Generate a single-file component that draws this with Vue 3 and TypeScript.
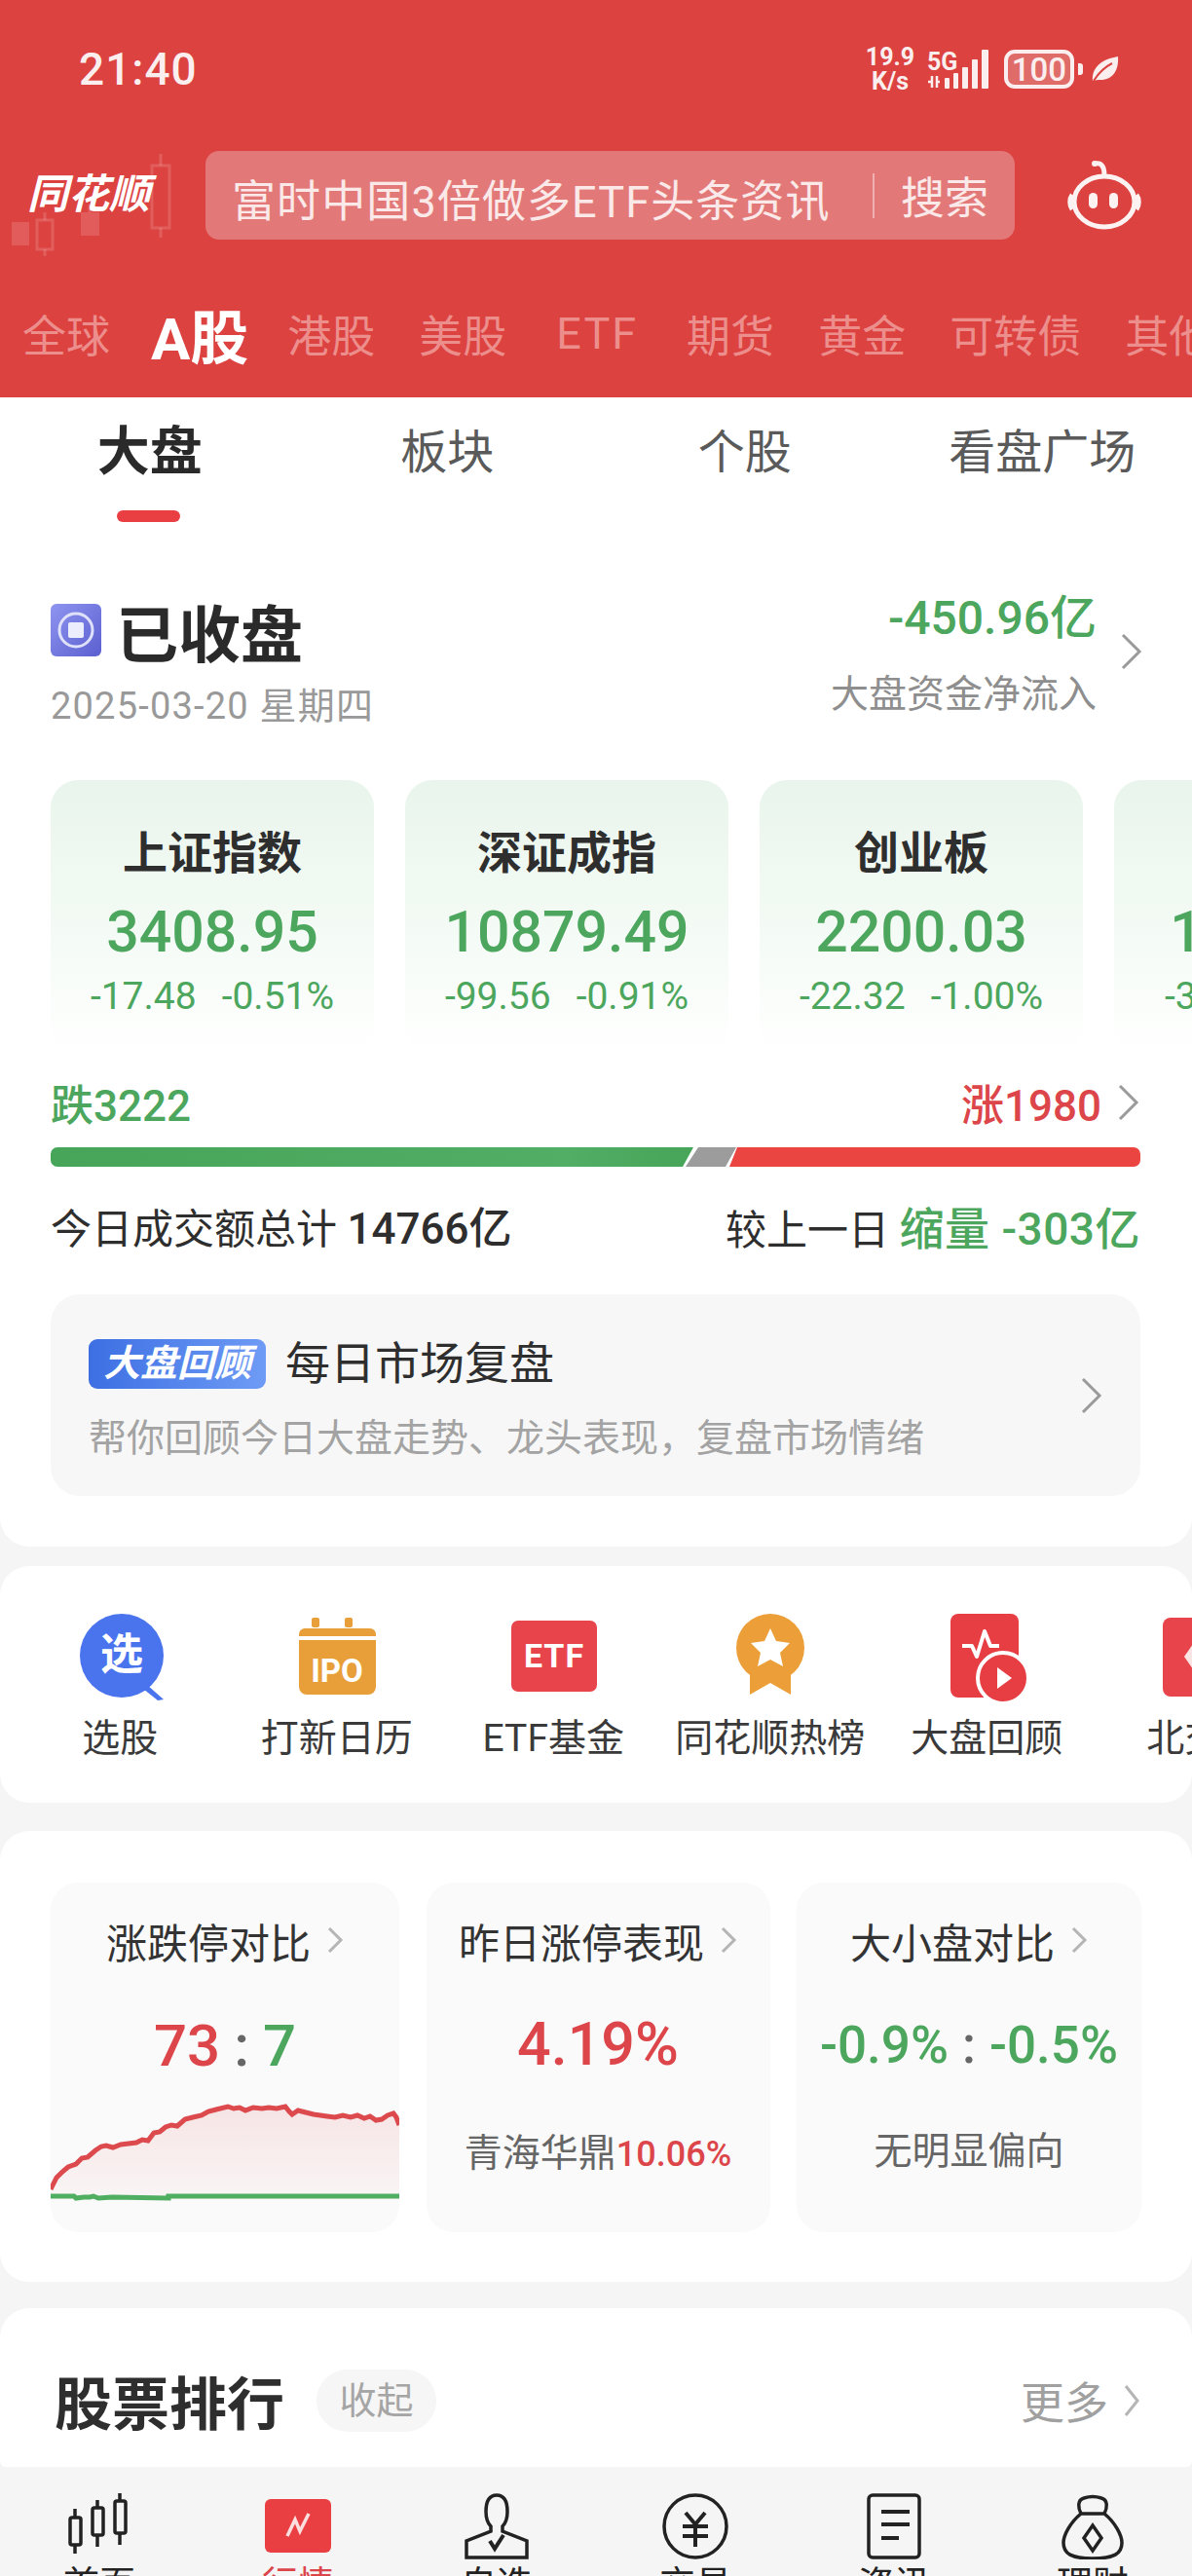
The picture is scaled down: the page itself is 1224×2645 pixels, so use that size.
<script setup lang="ts">
interface Index { name: string; value: string; change: string; pct: string }
const topTabs: string[] = ['全球', 'A股', '港股', '美股', 'ETF', '期货', '黄金', '可转债', '其他']
const subTabs: string[] = ['大盘', '板块', '个股', '看盘广场']
const indexes: Index[] = [
  { name: '上证指数', value: '3408.95', change: '-17.48', pct: '-0.51%' },
  { name: '深证成指', value: '10879.49', change: '-99.56', pct: '-0.91%' },
  { name: '创业板', value: '2200.03', change: '-22.32', pct: '-1.00%' },
  { name: '科创50', value: '1039.72', change: '-3.87', pct: '-0.37%' }
]
const navLabels: string[] = ['首页', '行情', '自选', '交易', '资讯', '理财']
const reviewSub = '帮你回顾今日大盘走势、龙头表现\uFF0C复盘市场情绪'
const redLine = '52,2248 58,2236 64,2230 70,2225 78,2222 84,2216 90,2215 98,2208 104,2204 109,2203 116,2205 124,2202 132,2201 140,2200 146,2197 152,2198 158,2190 164,2189 170,2184 176,2182 182,2183 190,2176 198,2174 207,2172 214,2168 222,2166 234,2163 240,2165 246,2164 252,2167 260,2164 269,2165 276,2164 284,2165 293,2163 297,2168 300,2171 306,2167 314,2169 322,2171 336,2173 344,2174 352,2172 360,2174 367,2172 374,2175 380,2173 386,2177 392,2176 398,2172 404,2170 407,2174 410,2182'
const areaPoints = `${redLine} 410,2256 52,2256`
</script>

<template>
  <div class="page">
    <header class="header">
      <div class="status">
        <span class="time">21:40</span>
        <div class="status-right">
          <div class="speed"><span>19.9</span><span>K/s</span></div>
          <svg class="signal" width="72" height="46" viewBox="0 0 72 46">
            <text x="2" y="24" class="five">5G</text>
            <path d="M7 30v12M3 36h3M12 30v12M12 36h3" stroke="#fbeeee" stroke-width="2.5" fill="none" />
            <g fill="#fbeeee">
              <rect x="20" y="32" width="5" height="11" rx="1" />
              <rect x="29" y="27" width="5" height="16" rx="1" />
              <rect x="38" y="21" width="6" height="22" rx="1" />
              <rect x="48" y="13" width="6" height="30" rx="1" />
              <rect x="58" y="3" width="7" height="40" rx="1" />
            </g>
          </svg>
          <div class="battery"><span>100</span><i class="nub"></i></div>
          <svg width="30" height="30" viewBox="0 0 30 30">
            <path d="M2 27C1 14 10 5 28 2c1 14-5 24-18 24-3 0-5 0-8 1z" fill="#fbeeee" />
            <path d="M3 27C8 19 14 13 22 9" stroke="#dc4240" stroke-width="2" fill="none" />
          </svg>
        </div>
      </div>
      <div class="search-row">
        <div class="logo">
          <svg class="candles" width="190" height="105" viewBox="0 0 190 105">
            <g fill="#fff" fill-opacity=".14" stroke="none">
              <rect x="12" y="70" width="18" height="24" />
              <rect x="83" y="60" width="19" height="24" />
            </g>
            <g fill="none" stroke="#fff" stroke-opacity=".15" stroke-width="3">
              <rect x="38" y="68" width="16" height="30" />
              <path d="M46 60v8M46 98v12M92 52v8M165 0v12M165 76v10" />
              <rect x="156" y="12" width="18" height="64" />
            </g>
          </svg>
          <span class="logo-text">同花顺</span>
        </div>
        <div class="search">
          <span class="placeholder">富时中国3倍做多ETF头条资讯</span>
          <i class="search-div"></i>
          <span class="search-btn">搜索</span>
        </div>
        <svg class="robot" width="80" height="72" viewBox="0 0 80 72">
          <g fill="none" stroke="#fdf2f2" stroke-width="5" stroke-linecap="round">
            <path d="M31 4c6-1 9 3 9 12" />
            <ellipse cx="40" cy="43" rx="31" ry="26" />
          </g>
          <circle cx="30" cy="4" r="3" fill="#fdf2f2" />
          <path d="M7 36c-3 4-3 11 0 15M73 36c3 4 3 11 0 15" stroke="#fdf2f2" stroke-width="5" fill="none" />
          <rect x="24" y="34" width="9" height="16" rx="4.5" fill="#fdf2f2" />
          <rect x="45" y="34" width="9" height="16" rx="4.5" fill="#fdf2f2" />
        </svg>
      </div>
      <nav class="top-tabs">
        <span v-for="t in topTabs" :key="t" :class="['top-tab', { active: t === 'A股', latin: t === 'ETF' }]">{{ t }}</span>
      </nav>
    </header>

    <section class="card card-main">
      <div class="sub-tabs">
        <div v-for="t in subTabs" :key="t" :class="['sub-tab', { active: t === '大盘' }]">{{ t }}</div>
      </div>

      <div class="head">
        <div class="head-left">
          <div class="closed">
            <svg width="52" height="54" viewBox="0 0 52 54">
              <defs>
                <linearGradient id="closedBg" x1="0" y1="0" x2="1" y2="1">
                  <stop offset="0" stop-color="#8f95f0" />
                  <stop offset="1" stop-color="#5b5fd0" />
                </linearGradient>
              </defs>
              <rect width="52" height="54" rx="6" fill="url(#closedBg)" />
              <circle cx="26" cy="27" r="17" fill="none" stroke="#dfe1fb" stroke-width="3" />
              <rect x="18" y="19" width="16" height="16" rx="2" fill="#eceefd" />
            </svg>
            <span>已收盘</span>
          </div>
          <div class="date">2025-03-20 星期四</div>
        </div>
        <div class="head-right">
          <div class="flow-box">
            <div class="flow">-450.96亿</div>
            <div class="flow-label">大盘资金净流入</div>
          </div>
          <svg class="chev-lg head-chev" width="24" height="38" viewBox="0 0 24 38"><path d="M3 2l17 17L3 36" /></svg>
        </div>
      </div>

      <div class="index-row">
        <div v-for="i in indexes" :key="i.name" class="index-card">
          <div class="index-name">{{ i.name }}</div>
          <div class="index-value">{{ i.value }}</div>
          <div class="index-change"><span>{{ i.change }}</span><span>{{ i.pct }}</span></div>
        </div>
      </div>

      <div class="count-row">
        <span class="green">跌3222</span>
        <span class="count-up"><span class="red">涨1980</span>
          <svg class="chev-lg" width="24" height="38" viewBox="0 0 24 38"><path d="M3 2l17 17L3 36" /></svg>
        </span>
      </div>

      <div class="bar">
        <svg width="1119" height="20" viewBox="0 0 1119 20" preserveAspectRatio="none">
          <defs>
            <linearGradient id="greenBar" x1="0" y1="0" x2="1" y2="0">
              <stop offset="0" stop-color="#46a558" />
              <stop offset=".8" stop-color="#52ad65" />
              <stop offset="1" stop-color="#46a558" />
            </linearGradient>
          </defs>
          <polygon points="0,0 660,0 649,20 0,20" fill="url(#greenBar)" />
          <polygon points="665,0 704,0 693,20 652,20" fill="#9c9c9c" />
          <polygon points="705,0 1119,0 1119,20 697,20" fill="#ea4540" />
        </svg>
      </div>

      <div class="turnover">
        <span>今日成交额总计 <b>14766亿</b></span>
        <span>较上一日 <em>缩量 -303亿</em></span>
      </div>

      <div class="review">
        <div class="review-body">
          <div class="review-title">
            <span class="review-badge">大盘回顾</span>
            <span>每日市场复盘</span>
          </div>
          <div class="review-sub">{{ reviewSub }}</div>
        </div>
        <svg class="chev-lg" width="24" height="38" viewBox="0 0 24 38"><path d="M3 2l17 17L3 36" /></svg>
      </div>
    </section>

    <section class="card card-icons">
      <div class="shortcut">
        <svg width="100" height="100" viewBox="0 0 100 100">
          <path d="M78 78l17 15-6 1-15-12z" fill="#4a73ee" />
          <circle cx="52" cy="48" r="43" fill="#4a73ee" />
          <text x="52" y="62" text-anchor="middle" class="ic-xuan">选</text>
        </svg>
        <span>选股</span>
      </div>
      <div class="shortcut">
        <svg width="100" height="100" viewBox="0 0 100 100">
          <rect x="24" y="9" width="8" height="10" rx="2" fill="#e89f3a" />
          <rect x="58" y="9" width="8" height="10" rx="2" fill="#e89f3a" />
          <path d="M11 26a6 6 0 0 1 6-6h67a6 6 0 0 1 6 6v2H11z" fill="#e89f3a" />
          <path d="M11 32h79v48a8 8 0 0 1-8 8H19a8 8 0 0 1-8-8z" fill="#e89f3a" />
          <text x="50" y="75" text-anchor="middle" class="ic-ipo">IPO</text>
        </svg>
        <span>打新日历</span>
      </div>
      <div class="shortcut">
        <svg width="100" height="100" viewBox="0 0 100 100">
          <rect x="7" y="12" width="88" height="73" rx="7" fill="#e8444c" />
          <text x="51" y="60" text-anchor="middle" class="ic-etf">ETF</text>
        </svg>
        <span>ETF基金</span>
      </div>
      <div class="shortcut">
        <svg width="100" height="100" viewBox="0 0 100 100">
          <path d="M29 55h42v33L50 76 29 88z" fill="#ec9f38" />
          <ellipse cx="50" cy="40" rx="35" ry="35" fill="#ec9f38" />
          <path d="M50 20l6 13 14 2-10 10 3 14-13-7-13 7 3-14-10-10 14-2z" fill="#fff" />
        </svg>
        <span>同花顺热榜</span>
      </div>
      <div class="shortcut">
        <svg width="100" height="100" viewBox="0 0 100 100">
          <rect x="13" y="5" width="70" height="86" rx="8" fill="#e63e43" />
          <path d="M25 38h10l5 11 8-26 6 15h9" fill="none" stroke="#fff" stroke-width="4" stroke-linejoin="round" />
          <circle cx="67" cy="71" r="26" fill="#e63e43" stroke="#fff" stroke-width="4" />
          <path d="M61 60l15 11-15 11z" fill="#fff" />
        </svg>
        <span>大盘回顾</span>
      </div>
      <div class="shortcut">
        <svg width="100" height="100" viewBox="0 0 100 100">
          <rect x="8" y="9" width="82" height="81" rx="8" fill="#e8444c" />
          <path d="M38 9h44a8 8 0 0 1 8 8v65a8 8 0 0 1-8 8H38z" fill="#f0949a" />
          <path d="M30 49l14-20 14 20-14 20z" fill="#fbe4e4" />
        </svg>
        <span>北交所</span>
      </div>
    </section>

    <section class="card card-compare">
      <div class="cmp cmp-chart">
        <div class="cmp-title">涨跌停对比<svg class="chev-sm" width="18" height="28" viewBox="0 0 18 28"><path d="M3 2l12 12L3 26" /></svg></div>
        <div class="cmp-ratio"><span class="red">73</span><span class="colon">:</span><span class="green">7</span></div>
        <svg class="cmp-svg" width="358" height="122" viewBox="52 2150 358 122">
          <defs>
            <linearGradient id="areaFill" x1="0" y1="0" x2="0" y2="1">
              <stop offset="0" stop-color="#e0474c" stop-opacity=".12" />
              <stop offset="1" stop-color="#e0474c" stop-opacity=".03" />
            </linearGradient>
          </defs>
          <polygon :points="areaPoints" fill="url(#areaFill)" />
          <polyline :points="redLine" fill="none" stroke="#dc4a4e" stroke-width="5" />
          <path d="M52 2255h24l2 2 8-1h6l4-1 5 2 14-1 58 1v-2h240" fill="none" stroke="#4fae5f" stroke-width="5" />
        </svg>
      </div>
      <div class="cmp">
        <div class="cmp-title">昨日涨停表现<svg class="chev-sm" width="18" height="28" viewBox="0 0 18 28"><path d="M3 2l12 12L3 26" /></svg></div>
        <div class="cmp-value red">4.19%</div>
        <div class="cmp-foot">青海华鼎<span class="red">10.06%</span></div>
      </div>
      <div class="cmp">
        <div class="cmp-title">大小盘对比<svg class="chev-sm" width="18" height="28" viewBox="0 0 18 28"><path d="M3 2l12 12L3 26" /></svg></div>
        <div class="cmp-pair green">-0.9%<span class="colon">:</span>-0.5%</div>
        <div class="cmp-foot">无明显偏向</div>
      </div>
    </section>

    <section class="card card-rank">
      <span class="rank-title">股票排行</span>
      <span class="rank-pill">收起</span>
      <span class="rank-more">更多
        <svg class="chev-sm" width="18" height="34" viewBox="0 0 18 34"><path d="M3 2l12 15L3 32" /></svg>
      </span>
    </section>

    <nav class="bottom-nav">
      <div v-for="(label, n) in navLabels" :key="label" :class="['nav-item', { active: n === 1 }]">
        <svg width="80" height="68" viewBox="0 0 80 68">
          <g v-if="n === 0" fill="none" stroke="#222" stroke-width="3.5">
            <rect x="10" y="25" width="11" height="28" rx="2" />
            <rect x="33" y="15" width="11" height="28" rx="2" />
            <rect x="56" y="8" width="11" height="33" rx="2" />
            <path d="M15 16v9M15 53v9M38 7v8M38 43v12M61 0v8M61 41v12" />
          </g>
          <g v-else-if="n === 1">
            <rect x="6" y="6" width="68" height="55" rx="6" fill="#ea3f42" />
            <path d="M29 44l8-17 5 12 9-18" fill="none" stroke="#fbdede" stroke-width="3.5" />
          </g>
          <g v-else-if="n === 2" fill="none" stroke="#222" stroke-width="3.5">
            <path d="M40 2c-7 0-11 6-11 17 0 7 2 12 5 15v5L9 49v17h62V49L46 39v-5c3-3 5-8 5-15 0-11-4-17-11-17z" />
            <path d="M33 49l5 8 9-14" stroke-width="4" />
          </g>
          <g v-else-if="n === 3" fill="none" stroke="#222">
            <ellipse cx="40" cy="34" rx="32" ry="32" stroke-width="3.5" />
            <path d="M30 20l10 12 10-12M27 34h26M27 44h26M40 32v23" stroke-width="4" />
          </g>
          <g v-else-if="n === 4" fill="none" stroke="#222">
            <rect x="14" y="2" width="52" height="64" rx="4" stroke-width="3.5" />
            <path d="M27 19h29M27 32h29M27 46h18" stroke-width="4" />
          </g>
          <g v-else fill="none" stroke="#222" stroke-width="3.5">
            <path d="M28 21c-3-6-4-14 3-16 6-2 12-2 18 0 7 2 6 10 3 16" />
            <path d="M28 21h24c11 9 18 22 18 30 0 11-8 16-30 16S10 62 10 51c0-8 7-21 18-30z" />
            <path d="M40 33l9 13-9 13-9-13z" />
          </g>
        </svg>
        <span>{{ label }}</span>
      </div>
    </nav>
  </div>
</template>

<style>
html, body { margin: 0; background: #f5f5f5; }
</style>

<style scoped>
.page {
  width: 1224px;
  height: 2645px;
  overflow: hidden;
  display: flex;
  flex-direction: column;
  background: #f5f5f5;
  color: #2e2e2e;
  font-family: Roboto, "Noto Sans CJK SC", sans-serif;
}
.red { color: #dc4549; }
.green { color: #4ca65d; }

.header { background: #dc4240; height: 408px; flex-shrink: 0; color: #fff; }
.status {
  height: 155px;
  padding: 46px 74px 0 81px;
  box-sizing: border-box;
  display: flex;
  justify-content: space-between;
  align-items: flex-start;
}
.time { font-size: 46px; line-height: 50px; font-weight: 500; color: #fbeeee; letter-spacing: 1px; }
.status-right { display: flex; align-items: center; color: #fbeeee; }
.speed {
  width: 56px;
  display: flex;
  flex-direction: column;
  align-items: center;
  font-size: 25px;
  line-height: 25px;
  font-weight: 700;
  margin-right: 8px;
}
.signal { margin-right: 9px; }
.five { font-size: 25px; font-weight: 700; fill: #fbeeee; }
.battery {
  position: relative;
  width: 72px;
  height: 40px;
  box-sizing: border-box;
  border: 4px solid #fbeeee;
  border-radius: 11px;
  background: #e06c6a;
  display: flex;
  align-items: center;
  justify-content: center;
  font-size: 33px;
  font-weight: 500;
  margin-right: 17px;
}
.nub {
  position: absolute;
  right: -13px;
  top: 10px;
  width: 5px;
  height: 12px;
  border-radius: 0 3px 3px 0;
  background: #fbeeee;
}

.search-row { display: flex; align-items: flex-start; height: 91px; }
.logo { position: relative; width: 211px; height: 91px; flex-shrink: 0; }
.candles { position: absolute; left: 0; top: 3px; }
.logo-text {
  position: absolute;
  left: 28px;
  top: 20px;
  font-size: 42px;
  line-height: 50px;
  font-weight: 700;
  font-style: italic;
  color: #fff;
  white-space: nowrap;
}
.search {
  width: 831px;
  height: 91px;
  flex-shrink: 0;
  border-radius: 14px;
  background: #e27978;
  display: flex;
  align-items: center;
  padding: 5px 0 0 27px;
  box-sizing: border-box;
  color: #fbe9e9;
}
.placeholder { width: 658px; font-size: 45px; white-space: nowrap; letter-spacing: 1.1px; }
.search-div { width: 2px; height: 46px; background: #efb0af; margin: -5px 27px 0 0; }
.search-btn { font-size: 45px; white-space: nowrap; margin-top: -5px; }
.robot { margin: 9px 0 0 52px; flex-shrink: 0; }

.top-tabs {
  display: flex;
  align-items: center;
  gap: 45px;
  height: 72px;
  margin-top: 60px;
  padding-left: 23px;
  overflow: hidden;
  white-space: nowrap;
}
.top-tab { font-size: 45px; color: #ec8e8c; flex-shrink: 0; }
.top-tab.active { font-size: 60px; font-weight: 700; color: #fff; margin: 0 -5px 0 -3px; }
.top-tab.latin { letter-spacing: 2px; margin: 0 5px 0 6px; }

.card { background: #fff; border-radius: 30px; flex-shrink: 0; }
.card-main { height: 1180px; border-radius: 0 0 30px 30px; padding: 0 53px 0 52px; box-sizing: border-box; }
.sub-tabs {
  display: grid;
  grid-template-columns: repeat(4, 305.5px);
  height: 202px;
  margin-left: -51px;
}
.sub-tab { position: relative; height: 114px; line-height: 114px; text-align: center; font-size: 48px; color: #5a5a5a; }
.sub-tab.active { font-size: 54px; font-weight: 700; color: #2a2a2a; }
.sub-tab.active::after {
  content: "";
  position: absolute;
  left: 119px;
  bottom: -14px;
  width: 65px;
  height: 12px;
  border-radius: 6px;
  background: #ea3f42;
}

.head { display: flex; justify-content: space-between; height: 156px; }
.closed { display: flex; align-items: center; height: 74px; gap: 15px; font-size: 64px; font-weight: 700; color: #2a2a2a; }
.date { height: 82px; line-height: 82px; font-size: 38px; color: #999; letter-spacing: 1.2px; white-space: nowrap; }
.head-right { display: flex; align-items: flex-start; gap: 24px; text-align: right; margin: -4px -3px 0 0; }
.flow { font-size: 48px; line-height: 58px; font-weight: 500; color: #4ca65d; white-space: nowrap; }
.flow-label { margin-top: 24px; font-size: 39px; line-height: 50px; color: #8e8e8e; white-space: nowrap; }
.head-chev { margin-top: 44px; }
.chev-lg { flex-shrink: 0; }
.chev-lg path, .chev-sm path { fill: none; stroke: #9a9a9a; stroke-width: 3; }
.chev-sm path { stroke: #b5b5b5; }

.index-row { display: flex; gap: 32px; margin-top: 35px; width: 1172px; overflow: hidden; }
.index-card {
  width: 332px;
  height: 281px;
  flex-shrink: 0;
  box-sizing: border-box;
  padding-top: 45px;
  border-radius: 28px;
  background: linear-gradient(180deg, #e9f5ec 0%, #f5fbf6 60%, #ffffff 100%);
  text-align: center;
}
.index-name { font-size: 46px; line-height: 60px; font-weight: 700; color: #2e2e2e; }
.index-value { margin-top: 12px; font-size: 59px; line-height: 78px; font-weight: 500; color: #4ca65d; }
.index-change {
  margin-top: 5px;
  display: flex;
  justify-content: center;
  gap: 26px;
  font-size: 39px;
  line-height: 44px;
  color: #4ca65d;
  white-space: nowrap;
}

.count-row {
  display: flex;
  justify-content: space-between;
  align-items: center;
  height: 60px;
  margin-top: 20px;
  font-size: 44px;
  font-weight: 500;
}
.count-up { display: flex; align-items: center; gap: 16px; }
.bar { height: 20px; margin-top: 16px; border-radius: 7px; overflow: hidden; }
.bar svg { display: block; }
.turnover {
  display: flex;
  justify-content: space-between;
  align-items: center;
  height: 60px;
  margin-top: 30px;
  font-size: 42px;
  white-space: nowrap;
}
.turnover b { font-weight: 500; font-size: 44px; }
.turnover em { font-style: normal; font-weight: 500; color: #4ca65d; font-size: 46px; letter-spacing: .5px; }

.review {
  display: flex;
  align-items: center;
  justify-content: space-between;
  height: 207px;
  margin-top: 41px;
  padding: 0 38px 0 39px;
  box-sizing: border-box;
  border-radius: 30px;
  background: #f7f7f7;
}
.review-body { margin-top: 12px; }
.review-title { display: flex; align-items: center; gap: 20px; font-size: 46px; line-height: 51px; color: #2e2e2e; }
.review-badge {
  width: 182px;
  height: 51px;
  border-radius: 9px;
  background: linear-gradient(90deg, #3d6fe3, #6e9bf5);
  color: #fff;
  font-size: 38px;
  line-height: 51px;
  font-weight: 700;
  font-style: italic;
  text-align: center;
}
.review-sub { margin-top: 25px; font-size: 39px; line-height: 52px; color: #a3a3a3; white-space: nowrap; }

.card-icons {
  display: flex;
  margin-top: 20px;
  height: 243px;
  padding: 44px 0 0 12px;
  box-sizing: border-box;
  overflow: hidden;
}
.shortcut { width: 222.5px; flex-shrink: 0; display: flex; flex-direction: column; align-items: center; }
.shortcut span { margin-top: 8px; font-size: 39px; line-height: 50px; white-space: nowrap; color: #3a3a3a; }
.ic-xuan { font-size: 44px; font-weight: 700; fill: #fff; font-family: "Noto Sans CJK SC", sans-serif; }
.ic-ipo { font-size: 33px; font-weight: 700; fill: #fff; font-family: Roboto, sans-serif; }
.ic-etf { font-size: 34px; font-weight: 700; fill: #fff; font-family: Roboto, sans-serif; letter-spacing: 1px; }

.card-compare {
  display: grid;
  grid-template-columns: 358px 353px 354px;
  column-gap: 27.5px;
  height: 463px;
  margin-top: 29px;
  padding: 53px 52px 51px;
  box-sizing: border-box;
}
.cmp {
  height: 359px;
  box-sizing: border-box;
  padding-top: 34px;
  border-radius: 28px;
  background: #fafafa;
  text-align: center;
  overflow: hidden;
}
.cmp-title {
  display: flex;
  align-items: center;
  justify-content: center;
  gap: 16px;
  height: 50px;
  font-size: 42px;
  color: #333;
  white-space: nowrap;
}
.cmp-ratio {
  display: flex;
  justify-content: center;
  align-items: center;
  gap: 14px;
  height: 70px;
  margin-top: 48px;
  font-size: 60px;
  font-weight: 500;
}
.colon { color: #666; font-weight: 500; }
.cmp-svg { display: block; margin-top: 15px; }
.cmp-value { height: 70px; line-height: 70px; margin-top: 47px; font-size: 61px; font-weight: 500; }
.cmp-pair {
  display: flex;
  justify-content: center;
  align-items: center;
  gap: 14px;
  height: 70px;
  margin-top: 48px;
  font-size: 53px;
  font-weight: 500;
  white-space: nowrap;
}
.cmp-foot { margin-top: 49px; font-size: 39px; line-height: 50px; color: #666; white-space: nowrap; }
.cmp-value + .cmp-foot { margin-top: 52px; }
.cmp-foot span { font-size: 36px; font-weight: 500; }

.card-rank {
  display: flex;
  align-items: center;
  height: 163px;
  margin-top: 27px;
  padding: 26px 53px 0 56px;
  box-sizing: border-box;
  border-radius: 30px 30px 6px 6px;
}
.rank-title { font-size: 59px; font-weight: 700; color: #2e2e2e; white-space: nowrap; }
.rank-pill {
  width: 123px;
  height: 64px;
  margin-left: 33px;
  border-radius: 32px;
  background: #f6f6f6;
  text-align: center;
  font-size: 38px;
  line-height: 64px;
  color: #a5a5a5;
}
.rank-more {
  margin-left: auto;
  display: flex;
  align-items: center;
  gap: 15px;
  font-size: 45px;
  color: #a0a0a0;
  white-space: nowrap;
}

.bottom-nav { display: grid; grid-template-columns: repeat(6, 204px); padding-top: 27px; }
.nav-item { display: flex; flex-direction: column; align-items: center; color: #222; }
.nav-item svg { flex-shrink: 0; }
.nav-item span { margin-top: 5px; font-size: 37px; line-height: 44px; }
.nav-item.active { color: #dc4549; }
</style>
